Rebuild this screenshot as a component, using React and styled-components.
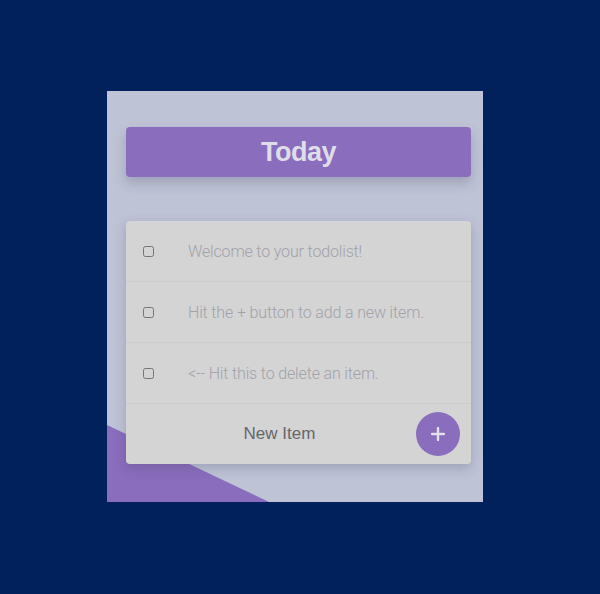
import React from "react";
import styled, { createGlobalStyle } from "styled-components";

const Global = createGlobalStyle`
  html, body { margin: 0; padding: 0; background: #00215b; }
  body { font-family: "Liberation Sans", Arial, sans-serif; }
  * { box-sizing: border-box; }
`;

const Page = styled.div`
  width: 600px;
  height: 594px;
  padding: 91px 0 0 107px;
  background: #00215b;
`;

const Panel = styled.div`
  position: relative;
  width: 376px;
  height: 411px;
  background: #bfc3d6;
  padding: 36px 12px 0 19px;
  overflow: hidden;
  &::before {
    content: "";
    position: absolute;
    left: 0;
    bottom: 0;
    width: 162px;
    height: 77px;
    background: #8a6dbd;
    clip-path: polygon(0 0, 100% 100%, 0 100%);
  }
`;

const Header = styled.div`
  position: relative;
  height: 50px;
  border-radius: 4px;
  background: #8a6dbd;
  box-shadow: 0 6px 12px rgba(60, 60, 90, 0.25);
  display: flex;
  align-items: center;
  justify-content: center;
  padding-top: 1px;
  font-family: "Liberation Sans", Arial, sans-serif;
  font-weight: 700;
  font-size: 27px;
  letter-spacing: -0.5px;
  color: #dedde8;
`;

const Card = styled.div`
  position: relative;
  margin-top: 44px;
  background: #d4d4d5;
  border-radius: 4px;
  box-shadow: 0 4px 12px rgba(60, 60, 90, 0.25);
  display: flex;
  flex-direction: column;
`;

const Row = styled.div`
  height: 61px;
  display: flex;
  align-items: center;
  padding-left: 17px;
  border-bottom: 1px solid #cbcbcd;
`;

const Check = styled.span`
  width: 11px;
  height: 11px;
  border: 1.3px solid #747478;
  border-radius: 2.5px;
  flex: none;
`;

const ItemText = styled.span`
  margin-left: 34px;
  font-family: Roboto, "Liberation Sans", sans-serif;
  font-weight: 300;
  font-size: 16px;
  letter-spacing: -0.15px;
  color: #a2a2aa;
`;

const Footer = styled.div`
  height: 60px;
  display: flex;
  align-items: center;
  padding-right: 11px;
`;

const NewItem = styled.div`
  flex: 1;
  text-align: center;
  padding-left: 17px;
  font-family: "Liberation Sans", Arial, sans-serif;
  font-size: 17px;
  color: #66666a;
`;

const AddButton = styled.div`
  width: 44px;
  height: 44px;
  border-radius: 50%;
  background: #8a6dbd;
  display: flex;
  align-items: center;
  justify-content: center;
  flex: none;
`;

const items = [
  "Welcome to your todolist!",
  "Hit the + button to add a new item.",
  "<-- Hit this to delete an item.",
];

export default function App() {
  return (
    <Page>
      <Global />
      <Panel>
        <Header>Today</Header>
        <Card>
          {items.map((t) => (
            <Row key={t}>
              <Check />
              <ItemText>{t}</ItemText>
            </Row>
          ))}
          <Footer>
            <NewItem>New Item</NewItem>
            <AddButton>
              <svg width="14" height="14" viewBox="0 0 14 14">
                <path d="M7 1v12M1 7h12" stroke="#e2e0ea" strokeWidth="2.4" strokeLinecap="round" />
              </svg>
            </AddButton>
          </Footer>
        </Card>
      </Panel>
    </Page>
  );
}
